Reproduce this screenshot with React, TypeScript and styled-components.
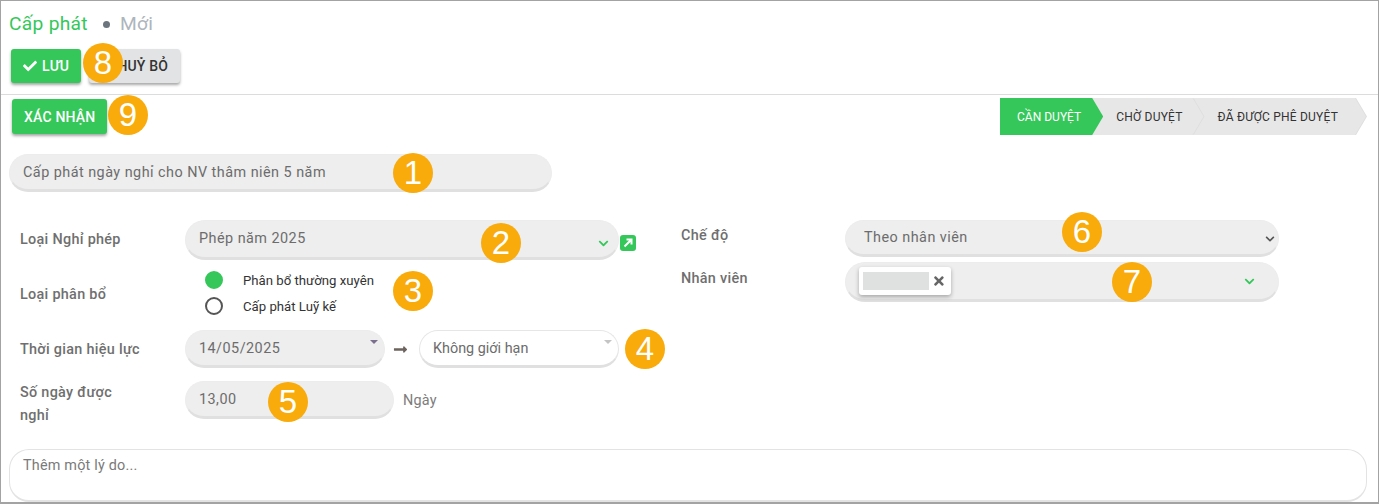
import styled, { createGlobalStyle } from "styled-components";
import { FaCheck, FaChevronDown, FaTimes, FaLongArrowAltRight } from "react-icons/fa";

const GlobalStyle = createGlobalStyle`
  html, body {
    margin: 0;
    padding: 0;
    background: #fff;
    font-family: Roboto, "Noto Sans", sans-serif;
  }
  * { box-sizing: border-box; }
`;

const badges = [
  { n: 1, x: 413, y: 173 },
  { n: 2, x: 501, y: 243 },
  { n: 3, x: 413, y: 291 },
  { n: 4, x: 645, y: 349 },
  { n: 5, x: 288, y: 402 },
  { n: 6, x: 1082, y: 232 },
  { n: 7, x: 1132, y: 282 },
  { n: 8, x: 103, y: 63 },
  { n: 9, x: 128, y: 115 },
];

function App() {
  return (
    <>
      <GlobalStyle />
      <Frame>
        <Title>
          <span>Cấp phát</span>
          <Dot />
          <Muted>Mới</Muted>
        </Title>
        <ActionRow>
          <Button $primary>
            <FaCheck size={14} /> LƯU
          </Button>
          <Button>HUỶ BỎ</Button>
        </ActionRow>
        <Toolbar>
          <Button $primary $tall>
            XÁC NHẬN
          </Button>
          <StatusBar>
            <Stage $active>CẦN DUYỆT</Stage>
            <Stage>CHỜ DUYỆT</Stage>
            <Stage $last>ĐÃ ĐƯỢC PHÊ DUYỆT</Stage>
          </StatusBar>
        </Toolbar>

        <NameField>Cấp phát ngày nghỉ cho NV thâm niên 5 năm</NameField>

        <FormColumns>
          <LeftColumn>
            <Row $height={40}>
              <Label $up>Loại Nghỉ phép</Label>
              <Field $width={434} $height={40}>
                Phép năm 2025
                <GreenChevron>
                  <FaChevronDown size={11} />
                </GreenChevron>
              </Field>
              <LinkIcon viewBox="0 0 16 16">
                <rect width="16" height="16" rx="3" fill="#35c75a" />
                <path d="M4.5 11.5 10.5 5.5M6.5 4.5h5v5" stroke="#fff" strokeWidth="2" fill="none" />
              </LinkIcon>
            </Row>
            <AllocationRow>
              <Label $up>Loại phân bổ</Label>
              <RadioGroup>
                <RadioRow>
                  <Radio $checked />
                  Phân bổ thường xuyên
                </RadioRow>
                <RadioRow>
                  <Radio />
                  Cấp phát Luỹ kế
                </RadioRow>
              </RadioGroup>
            </AllocationRow>
            <Row $height={38}>
              <Label>Thời gian hiệu lực</Label>
              <Field $width={200} $height={38}>
                14/05/2025
                <Caret $color="#7a6f8f" />
              </Field>
              <RangeArrow>
                <FaLongArrowAltRight size={15} />
              </RangeArrow>
              <Field $width={200} $height={38} $white>
                Không giới hạn
                <Caret $color="#c4c4c4" />
              </Field>
            </Row>
            <DaysRow>
              <Label $wrap>Số ngày được nghỉ</Label>
              <Field $width={209} $height={38}>
                13,00
              </Field>
              <Unit>Ngày</Unit>
            </DaysRow>
          </LeftColumn>
          <RightColumn>
            <Row $height={37}>
              <RightLabel>Chế độ</RightLabel>
              <Field $width={434} $height={37} $select>
                Theo nhân viên
                <DarkChevron>
                  <FaChevronDown size={10} />
                </DarkChevron>
              </Field>
            </Row>
            <EmployeeRow>
              <RightLabel>Nhân viên</RightLabel>
              <Field $width={434} $height={40}>
                <Chip>
                  <ChipMask />
                  <FaTimes size={14} color="#666" />
                </Chip>
                <EmployeeChevron>
                  <FaChevronDown size={11} />
                </EmployeeChevron>
              </Field>
            </EmployeeRow>
          </RightColumn>
        </FormColumns>

        <ReasonBox>Thêm một lý do...</ReasonBox>

        {badges.map((b) => (
          <Badge key={b.n} $x={b.x} $y={b.y}>
            {b.n}
          </Badge>
        ))}
      </Frame>
    </>
  );
}

export default App;

const Frame = styled.div`
  position: relative;
  width: 1379px;
  height: 504px;
  border: 1px solid #a3a3a3;
  border-bottom-width: 2px;
  background: #fff;
  overflow: hidden;
`;
const Title = styled.div`
  display: flex;
  align-items: center;
  height: 47px;
  padding: 0 0 2px 8px;
  font-size: 19.2px;
  color: #35c75a;
  letter-spacing: 0.3px;
`;
const Dot = styled.i`
  width: 7px;
  height: 7px;
  margin: 2px 10px 0 15px;
  border-radius: 50%;
  background: #6c757d;
`;
const Muted = styled.span`
  color: #adb5bd;
`;
const ActionRow = styled.div`
  display: flex;
  gap: 8px;
  height: 47px;
  padding: 1px 0 0 10px;
  border-bottom: 1px solid #dcdcdc;
`;
const Button = styled.div<{ $primary?: boolean; $tall?: boolean }>`
  display: flex;
  align-items: center;
  justify-content: ${(p) => (p.$primary ? "center" : "flex-end")};
  gap: 5px;
  height: ${(p) => (p.$tall ? 35 : 34)}px;
  padding: 0 12px;
  min-width: ${(p) => (p.$primary ? 70 : 91)}px;
  border-radius: 3px;
  font-size: 14px;
  font-weight: 500;
  letter-spacing: 0.2px;
  color: ${(p) => (p.$primary ? "#fff" : "#333")};
  background: ${(p) => (p.$primary ? "#35c75a" : "#e2e3e5")};
  box-shadow: 0 2px 3px rgba(0, 0, 0, 0.35);
`;
const Toolbar = styled.div`
  display: flex;
  align-items: flex-start;
  justify-content: space-between;
  height: 40px;
  padding: 3px 11px 0 11px;
  ${Button} {
    margin-top: 1px;
  }
`;
const StatusBar = styled.div`
  display: flex;
`;
const Stage = styled.div<{ $active?: boolean; $last?: boolean }>`
  position: relative;
  display: flex;
  align-items: center;
  height: 37px;
  margin-left: -11px;
  padding: 0 ${(p) => (p.$last ? 29 : 22)}px 0 24px;
  font-size: 12px;
  letter-spacing: ${(p) => (p.$active ? 0 : 0.2)}px;
  color: ${(p) => (p.$active ? "#fff" : "#333")};
  background: ${(p) => (p.$active ? "#35c75a" : "#dedede")};
  clip-path: polygon(0 0, calc(100% - 11px) 0, 100% 50%, calc(100% - 11px) 100%, 0 100%);
  z-index: ${(p) => (p.$active ? 3 : p.$last ? 1 : 2)};
  &:first-child {
    margin-left: 0;
    padding-left: 17px;
  }
  &::before {
    content: "";
    position: absolute;
    inset: 0 1px 0 0;
    background: ${(p) => (p.$active ? "#35c75a" : "#e7e7e7")};
    clip-path: polygon(0 0, calc(100% - 11px) 0, 100% 50%, calc(100% - 11px) 100%, 0 100%);
    z-index: -1;
  }
`;
const Field = styled.div<{ $width: number; $height: number; $white?: boolean; $select?: boolean }>`
  position: relative;
  display: flex;
  align-items: center;
  flex: none;
  width: ${(p) => p.$width}px;
  height: ${(p) => p.$height}px;
  padding: 0 14px ${(p) => (p.$height > 38 ? 1 : 0)}px ${(p) => (p.$select ? 18 : 13)}px;
  border: 1px solid ${(p) => (p.$white ? "#e6e6e6" : "#ececec")};
  border-bottom: 3px solid #e0e0e0;
  border-radius: 20px;
  background: ${(p) => (p.$white ? "#fff" : "#eeeeee")};
  font-size: 14.4px;
  letter-spacing: ${(p) => (p.$white ? 0 : 0.47)}px;
  color: #6c6c6c;
`;
const NameField = styled(Field).attrs({ $width: 543, $height: 38 })`
  margin: 19px 0 0 8px;
`;
const FormColumns = styled.div`
  display: flex;
  align-items: flex-start;
  margin-top: 28px;
  padding-left: 19px;
`;
const LeftColumn = styled.div`
  width: 661px;
`;
const RightColumn = styled.div`
  width: 600px;
`;
const Row = styled.div<{ $height: number }>`
  display: flex;
  align-items: center;
  height: ${(p) => p.$height}px;
`;
const AllocationRow = styled.div`
  display: flex;
  align-items: center;
  height: 70px;
`;
const DaysRow = styled.div`
  display: flex;
  align-items: center;
  height: 38px;
  margin-top: 13px;
`;
const EmployeeRow = styled.div`
  display: flex;
  align-items: center;
  height: 40px;
  margin-top: 5px;
`;
const Label = styled.div<{ $wrap?: boolean; $up?: boolean }>`
  flex: none;
  width: ${(p) => (p.$wrap ? 120 : 165)}px;
  margin-right: ${(p) => (p.$wrap ? 45 : 0)}px;
  margin-top: ${(p) => (p.$wrap ? 8 : p.$up ? -2 : 0)}px;
  font-size: 14.4px;
  font-weight: 500;
  line-height: 23px;
  letter-spacing: 0.3px;
  color: #6f6f6f;
`;
const RightLabel = styled(Label)`
  margin-top: -7px;
  width: 164px;
`;
const GreenChevron = styled.span`
  position: absolute;
  right: 9px;
  top: 17px;
  line-height: 0;
  color: #35c75a;
`;
const DarkChevron = styled.span`
  position: absolute;
  right: 3px;
  top: 13px;
  line-height: 0;
  color: #555;
`;
const EmployeeChevron = styled(GreenChevron)`
  right: 23px;
  top: 13px;
`;
const LinkIcon = styled.svg`
  flex: none;
  width: 16px;
  height: 16px;
  margin: 5px 0 0 1px;
`;
const RadioGroup = styled.div`
  align-self: flex-start;
  display: flex;
  flex-direction: column;
  gap: 8px;
  margin: 11px 0 0 20px;
`;
const RadioRow = styled.div`
  display: flex;
  align-items: center;
  height: 18px;
  font-size: 13.2px;
  color: #333;
`;
const Radio = styled.i<{ $checked?: boolean }>`
  flex: none;
  width: 18px;
  height: 18px;
  margin-right: 20px;
  border-radius: 50%;
  border: 2px solid ${(p) => (p.$checked ? "#35c75a" : "#555")};
  background: ${(p) => (p.$checked ? "#35c75a" : "#fff")};
`;
const Caret = styled.i<{ $color: string }>`
  position: absolute;
  right: 6px;
  top: 9px;
  border-left: 4px solid transparent;
  border-right: 4px solid transparent;
  border-top: 4px solid ${(p) => p.$color};
`;
const RangeArrow = styled.span`
  display: flex;
  justify-content: center;
  width: 34px;
  padding-right: 3px;
  color: #6d635d;
`;
const Unit = styled.span`
  margin: 0 0 0 9px;
  font-size: 14.4px;
  letter-spacing: 0.2px;
  color: #7c7c7c;
`;
const Chip = styled.div`
  display: flex;
  align-items: center;
  gap: 3px;
  height: 28px;
  width: 92px;
  padding: 0 5px 0 4px;
  border-radius: 3px;
  background: #fff;
  box-shadow: 0 2px 4px rgba(0, 0, 0, 0.3);
`;
const ChipMask = styled.i`
  width: 67px;
  height: 18px;
  background: #dfe0e0;
`;
const ReasonBox = styled.div`
  height: 53px;
  margin: 30px 11px 0 8px;
  padding: 7px 13px;
  border: 1px solid #e3e3e3;
  border-bottom-width: 2px;
  border-radius: 20px;
  font-size: 14.4px;
  letter-spacing: 0.2px;
  color: #7a7a7a;
`;
const Badge = styled.div<{ $x: number; $y: number }>`
  position: absolute;
  left: ${(p) => p.$x - 21}px;
  top: ${(p) => p.$y - 21}px;
  display: flex;
  align-items: center;
  justify-content: center;
  width: 40px;
  height: 40px;
  border-radius: 50%;
  background: #f8ab0a;
  font-family: "Liberation Sans", Arial, sans-serif;
  font-size: 33px;
  color: #fff;
`;
